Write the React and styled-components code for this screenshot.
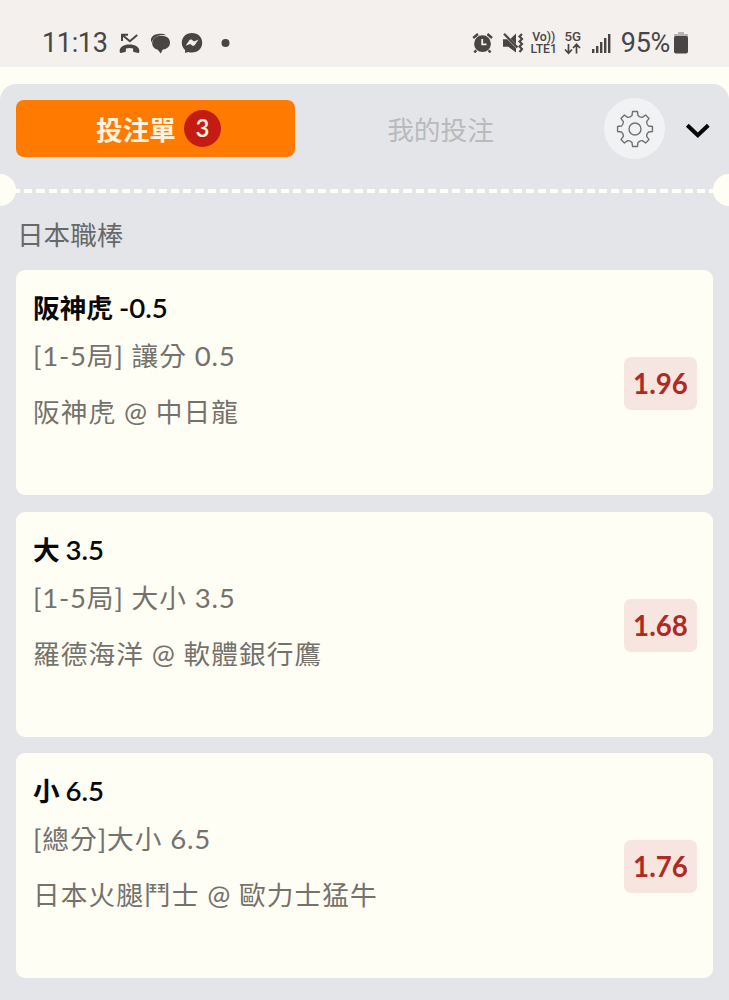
import React from "react";
import styled, { createGlobalStyle } from "styled-components";

const GlobalStyle = createGlobalStyle`
  * { box-sizing: border-box; }
  body {
    margin: 0;
    background: #fffef4;
    font-family: Lato, "Noto Sans CJK TC", sans-serif;
    overflow: hidden;
  }
  svg { display: block; flex: none; }
`;

const Screen = styled.div`
  width: 729px;
  height: 1000px;
  display: flex;
  flex-direction: column;
  overflow: hidden;
`;

const StatusBar = styled.header`
  height: 67px;
  flex: none;
  padding: 19px 41px 0 42px;
  display: flex;
  justify-content: space-between;
  align-items: flex-start;
  background: #f3f0ee;
  color: #484644;
  font-family: Roboto, sans-serif;
`;

const StatusGroup = styled.div`
  height: 48px;
  display: flex;
  align-items: center;
`;

const StatusText = styled.span`
  margin-left: ${(p) => p.$gap || 0}px;
  font-size: 27px;
  letter-spacing: ${(p) => p.$spacing || 0}px;
  line-height: 48px;
  white-space: nowrap;
`;

const Glyph = styled.svg.attrs({ fill: "currentColor" })`
  margin-left: ${(p) => p.$gap}px;
`;

const NetworkLabel = styled.div`
  width: ${(p) => p.$width}px;
  margin-left: ${(p) => p.$gap}px;
  display: flex;
  flex-direction: column;
  align-items: center;
  font-size: ${(p) => p.$size}px;
  line-height: 12px;
  font-weight: 500;
  white-space: nowrap;
`;

const Panel = styled.main`
  flex: 1;
  margin-top: 17px;
  border-radius: 16px 16px 0 0;
  background: #e4e5e8;
  overflow: hidden;
`;

const Toolbar = styled.nav`
  height: 90px;
  padding: 0 16px 1px;
  display: flex;
  align-items: center;
`;

const Tab = styled.button`
  width: 279px;
  height: 57px;
  padding: ${(p) => (p.$active ? "0 0 0 6px" : "0 0 0 12px")};
  border: 0;
  border-radius: 8px;
  display: flex;
  align-items: center;
  justify-content: center;
  gap: 8px;
  background: ${(p) => (p.$active ? "#ff7a00" : "transparent")};
  color: ${(p) => (p.$active ? "#fff3e0" : "#b9babc")};
  font: ${(p) => (p.$active ? 700 : 400)} 26.7px Lato, "Noto Sans CJK TC", sans-serif;
`;

const Count = styled.span`
  width: 37px;
  height: 37px;
  border-radius: 50%;
  background: #c41c12;
  color: #fff3e0;
  font-size: 24px;
  font-weight: 600;
  line-height: 36px;
  text-align: center;
`;

const SettingsButton = styled.button`
  width: 61px;
  height: 61px;
  margin-left: 30px;
  padding: 0;
  border: 0;
  border-radius: 50%;
  display: grid;
  place-items: center;
  background: #f1f2f4;
`;

const CollapseButton = styled.button`
  margin-left: 20px;
  padding: 4px 0 0;
  border: 0;
  background: none;
`;

const Perforation = styled.div`
  height: 32px;
  display: flex;
  justify-content: space-between;
  align-items: center;
  background:
    repeating-linear-gradient(90deg, #fffef4 0 8.2px, transparent 8.2px 12.23px)
    11.8px 15px / 705px 4px no-repeat;
`;

const Notch = styled.i`
  width: 16px;
  height: 32px;
  background: #fffef4;
  border-radius: ${(p) => (p.$right ? "16px 0 0 16px" : "0 16px 16px 0")};
`;

const League = styled.h2`
  height: 64px;
  margin: 0;
  padding: 0 17px;
  font-size: 26.6px;
  font-weight: 400;
  line-height: 59px;
  color: #67686a;
`;

const BetList = styled.div`
  padding: 0 16px;
  display: flex;
  flex-direction: column;
  gap: 16.4px;
`;

const BetCard = styled.article`
  height: 225.2px;
  padding: 16px 16px 0 17px;
  border-radius: 9px;
  display: flex;
  justify-content: space-between;
  background: #fffef4;
`;

const Latin = styled.span`
  font-size: 27.6px;
`;

const BetTitle = styled.h3`
  height: 44px;
  margin: 0;
  font-size: 26.7px;
  font-weight: 700;
  line-height: 44px;
  color: #080808;

  ${Latin} {
    font-weight: 600;
    word-spacing: -1px;
  }
`;

const BetLine = styled.p`
  height: 44px;
  margin: ${(p) => p.$top}px 0 0;
  font-size: 26.7px;
  font-weight: 400;
  line-height: 44px;
  letter-spacing: 1.07px;
  white-space: nowrap;
  color: #74726d;

  ${Latin} {
    letter-spacing: 0.75px;
  }
`;

const Odds = styled.div`
  width: 73px;
  height: 53px;
  margin-top: 71px;
  border-radius: 7px;
  background: #f7e6df;
  color: #b02a24;
  font-size: 27.7px;
  font-weight: 700;
  line-height: 53px;
  text-align: center;
`;

const bets = [
  { title: "阪神虎 -0.5", market: "[1-5局] 讓分 0.5", match: "阪神虎 @ 中日龍", odds: "1.96" },
  { title: "大 3.5", market: "[1-5局] 大小 3.5", match: "羅德海洋 @ 軟體銀行鷹", odds: "1.68" },
  { title: "小 6.5", market: "[總分]大小 6.5", match: "日本火腿鬥士 @ 歐力士猛牛", odds: "1.76" },
];

// Digits and punctuation are set slightly larger than the Han characters.
function Mixed({ text }) {
  return text
    .split(/([^\u4e00-\u9fff]+)/)
    .map((part, i) => (i % 2 ? <Latin key={i}>{part}</Latin> : part));
}

function gearPath(cx, cy, inner, outer, teeth) {
  const pts = [];
  const step = (Math.PI * 2) / teeth;
  const at = (r, a) => `${(cx + r * Math.sin(a)).toFixed(2)} ${(cy - r * Math.cos(a)).toFixed(2)}`;
  for (let i = 0; i < teeth; i++) {
    const a = i * step;
    pts.push(`${i ? "L" : "M"}${at(outer, a - 0.14)}`);
    pts.push(`L${at(outer, a + 0.14)}`);
    pts.push(`L${at(inner + 1, a + 0.22)}`);
    pts.push(`Q${at(inner - 0.4, a + step / 2)} ${at(inner + 1, a + step - 0.22)}`);
  }
  return pts.join(" ") + "Z";
}

function Status() {
  return (
    <StatusBar>
      <StatusGroup>
        <StatusText $spacing={-0.35}>11:13</StatusText>
        <Glyph $gap={11} width="22" height="20" viewBox="0 0 22 20">
          <path d="M3 8V1.8H9M3.6 2.2l7.3 6L18.2 2" fill="none" stroke="currentColor" strokeWidth="2" />
          <path d="M.8 19.2C-.2 14.5 4 11.4 10.5 11.4s10.7 3.1 9.7 7.8c-.2.6-.6.8-1.1.7l-4.2-.8c-.5-.1-.8-.5-.8-1v-2.5c-2.4-.8-4.8-.8-7.2 0v2.5c0 .5-.3.9-.8 1l-4.2.8c-.5.1-.9-.1-1.1-.7z" />
        </Glyph>
        <Glyph $gap={9} width="21" height="21" viewBox="0 0 21 21">
          <path d="M1.6 9.5C-.8 5 3.5 1 8.2.9c3.5-.2 6.2.2 8 1.3C9 1.1 3.4 3.8 1.6 9.5z" />
          <path d="M11.3 2.8c5.2 0 8.7 2.7 8.7 6.8 0 4.4-3.3 6.7-7.4 7.1l-1.8 3.8-3-3.8C4.1 15.8 2 13.1 2.2 10c.3-4.5 4-7.2 9.1-7.2z" />
        </Glyph>
        <Glyph $gap={10} width="22" height="22" viewBox="0 0 22 22">
          <path fillRule="evenodd" d="M11 1C5 1 .8 5.2.8 10.8c0 3 1.2 5.5 3.3 7.3V21l3-1.1c1.2.4 2.5.6 3.9.6 6 0 10.2-4.2 10.2-9.8S17 1 11 1zM4.7 13.8 8.3 8.2c.6-.9 1.7-1.1 2.6-.4l2.1 1.6 4.5-2-3.7 5.7c-.6.9-1.7 1.1-2.6.4l-2-1.6z" />
        </Glyph>
        <Glyph $gap={18} width="9" height="9" viewBox="0 0 9 9"><circle cx="4.5" cy="4" r="4" /></Glyph>
      </StatusGroup>
      <StatusGroup>
        <Glyph $gap={0} width="21" height="22" viewBox="0 0 21 22">
          <path d="M1.2 6 6 2M15.4 2l4.6 4M4.3 18.3l-2 2M16.6 18.3l2 2" stroke="currentColor" strokeWidth="2.4" />
          <circle cx="10.5" cy="11.7" r="8.4" />
          <path d="M10.2 7v5.3h4.3" fill="none" stroke="#f3f0ee" strokeWidth="1.8" />
        </Glyph>
        <Glyph $gap={9} width="22" height="22" viewBox="0 0 22 22">
          <path d="M1 7.2h4.2L14 16v4.6L6.3 14.8H1zM14 1.5v10.7L8.5 6.7z" />
          <path d="M2 1.8 15.5 15.5" stroke="currentColor" strokeWidth="2.2" />
          <path d="m20 2-2.5 2.5L20 7l-2.5 2.5L20 12l-2.5 2.5L20 17l-2.5 3" fill="none" stroke="currentColor" strokeWidth="2.1" />
        </Glyph>
        <NetworkLabel $width={26} $gap={7} $size={12.3}>
          <span>Vo))</span>
          <span>LTE1</span>
        </NetworkLabel>
        <NetworkLabel $width={18} $gap={7} $size={13.3}>
          <span>5G</span>
          <Glyph $gap={0} width="17" height="12" viewBox="0 0 17 12">
            <path d="M4.5 1v9M1 6.5l3.5 3.7L8 6.5M12.5 10.5v-9M9 5l3.5-3.7L16 5" fill="none" stroke="currentColor" strokeWidth="1.7" />
          </Glyph>
        </NetworkLabel>
        <Glyph $gap={10} width="20" height="22" viewBox="0 0 20 22">
          <path d="M0 17h2.4v4H0zM4 14h2.4v7H4zM8 10h2.4v11H8zM12 6h2.4v15H12zM16 2h2.4v19H16z" />
        </Glyph>
        <StatusText $gap={9} $spacing={-0.3}>95%</StatusText>
        <Glyph $gap={4} width="14" height="22" viewBox="0 0 14 22">
          <path d="M4 0h6v2h4v4H0V2h4z" opacity=".35" />
          <rect y="4" width="14" height="17.5" rx="2" />
        </Glyph>
      </StatusGroup>
    </StatusBar>
  );
}

export default function App() {
  return (
    <Screen>
      <GlobalStyle />
      <Status />
      <Panel>
        <Toolbar>
          <Tab $active>
            投注單<Count>3</Count>
          </Tab>
          <Tab>我的投注</Tab>
          <SettingsButton aria-label="設定">
            <svg width="38" height="38" viewBox="0 0 38 38" fill="none" stroke="#707173" strokeWidth="1.4" strokeLinejoin="round">
              <path d={gearPath(19, 19, 12.8, 17.6, 8)} />
              <circle cx="19" cy="19" r="6" />
            </svg>
          </SettingsButton>
          <CollapseButton aria-label="收合">
            <svg width="26" height="16" viewBox="0 0 26 16" fill="none" stroke="#080808" strokeWidth="4">
              <path d="m2.3 2.3 10.5 10 10.5-10" />
            </svg>
          </CollapseButton>
        </Toolbar>
        <Perforation>
          <Notch />
          <Notch $right />
        </Perforation>
        <League>日本職棒</League>
        <BetList>
          {bets.map((bet) => (
            <BetCard key={bet.match}>
              <div>
                <BetTitle><Mixed text={bet.title} /></BetTitle>
                <BetLine $top={4}><Mixed text={bet.market} /></BetLine>
                <BetLine $top={12}><Mixed text={bet.match} /></BetLine>
              </div>
              <Odds>{bet.odds}</Odds>
            </BetCard>
          ))}
        </BetList>
      </Panel>
    </Screen>
  );
}
